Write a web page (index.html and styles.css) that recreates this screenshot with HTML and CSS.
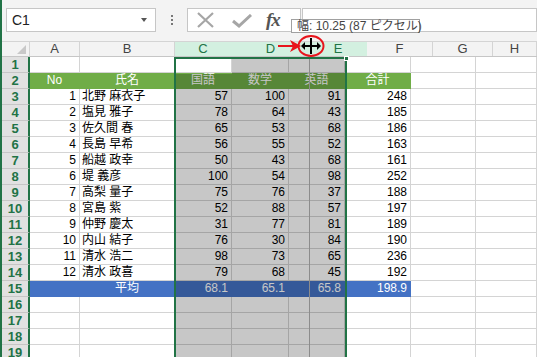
FILE: index.html
```html
<!doctype html>
<html lang="ja">
<head>
    <meta charset="utf-8">
    <title>列幅の変更</title>
    <link rel="stylesheet" href="styles.css">
</head>
<body>
<div class="window">
    <div class="toolbar">
        <div class="namebox"><span>C1</span><i class="caret"></i></div>
        <div class="dots"><i></i><i></i><i></i></div>
        <div class="fbuttons">
            <svg class="ic-x" width="18" height="16" viewBox="0 0 18 16"><path d="M1 1L16 15M16 1L1 15" stroke="#a6a6a6" stroke-width="2.2" fill="none"/></svg>
            <svg class="ic-ok" width="20" height="14" viewBox="0 0 20 14"><path d="M1 7L7 12L19 1" stroke="#a6a6a6" stroke-width="3" fill="none"/></svg>
            <span class="fx">fx</span>
        </div>
        <div class="finput"></div>
    </div>

    <div class="sheet">
        <div class="colhead">
            <div class="corner"><i></i></div>
            <div>A</div><div>B</div>
            <div class="on">C</div><div class="on">D</div><div class="on">E</div>
            <div>F</div><div>G</div><div>H</div>
        </div>

        <div class="row"><div class="rh">1</div><div></div><div></div><div></div><div></div><div></div><div></div><div></div><div></div></div>
        <div class="row green"><div class="rh">2</div><div class="c">No</div><div class="c">氏名</div><div class="c">国語</div><div class="c">数学</div><div class="c">英語</div><div class="c">合計</div><div class="n"></div><div class="n"></div></div>
        <div class="row"><div class="rh">3</div><div class="r">1</div><div>北野 麻衣子</div><div class="r">57</div><div class="r">100</div><div class="r">91</div><div class="r">248</div><div></div><div></div></div>
        <div class="row"><div class="rh">4</div><div class="r">2</div><div>塩見 雅子</div><div class="r">78</div><div class="r">64</div><div class="r">43</div><div class="r">185</div><div></div><div></div></div>
        <div class="row"><div class="rh">5</div><div class="r">3</div><div>佐久間 春</div><div class="r">65</div><div class="r">53</div><div class="r">68</div><div class="r">186</div><div></div><div></div></div>
        <div class="row"><div class="rh">6</div><div class="r">4</div><div>長島 早希</div><div class="r">56</div><div class="r">55</div><div class="r">52</div><div class="r">163</div><div></div><div></div></div>
        <div class="row"><div class="rh">7</div><div class="r">5</div><div>船越 政幸</div><div class="r">50</div><div class="r">43</div><div class="r">68</div><div class="r">161</div><div></div><div></div></div>
        <div class="row"><div class="rh">8</div><div class="r">6</div><div>堤 義彦</div><div class="r">100</div><div class="r">54</div><div class="r">98</div><div class="r">252</div><div></div><div></div></div>
        <div class="row"><div class="rh">9</div><div class="r">7</div><div>高梨 量子</div><div class="r">75</div><div class="r">76</div><div class="r">37</div><div class="r">188</div><div></div><div></div></div>
        <div class="row"><div class="rh">10</div><div class="r">8</div><div>宮島 紫</div><div class="r">52</div><div class="r">88</div><div class="r">57</div><div class="r">197</div><div></div><div></div></div>
        <div class="row"><div class="rh">11</div><div class="r">9</div><div>仲野 慶太</div><div class="r">31</div><div class="r">77</div><div class="r">81</div><div class="r">189</div><div></div><div></div></div>
        <div class="row"><div class="rh">12</div><div class="r">10</div><div>内山 結子</div><div class="r">76</div><div class="r">30</div><div class="r">84</div><div class="r">190</div><div></div><div></div></div>
        <div class="row"><div class="rh">13</div><div class="r">11</div><div>清水 浩二</div><div class="r">98</div><div class="r">73</div><div class="r">65</div><div class="r">236</div><div></div><div></div></div>
        <div class="row"><div class="rh">14</div><div class="r">12</div><div>清水 政喜</div><div class="r">79</div><div class="r">68</div><div class="r">45</div><div class="r">192</div><div></div><div></div></div>
        <div class="row blue"><div class="rh">15</div><div class="c"></div><div class="c">平均</div><div class="r">68.1</div><div class="r">65.1</div><div class="r">65.8</div><div class="r">198.9</div><div class="n"></div><div class="n"></div></div>
        <div class="row"><div class="rh">16</div><div></div><div></div><div></div><div></div><div></div><div></div><div></div><div></div></div>
        <div class="row"><div class="rh">17</div><div></div><div></div><div></div><div></div><div></div><div></div><div></div><div></div></div>
        <div class="row"><div class="rh">18</div><div></div><div></div><div></div><div></div><div></div><div></div><div></div><div></div></div>
        <div class="row"><div class="rh">19</div><div></div><div></div><div></div><div></div><div></div><div></div><div></div><div></div></div>

        <!-- selected columns C:E -->
        <div class="shade"></div>
        <div class="guide"></div>
        <div class="selbox"><i class="handle"></i></div>
    </div>

    <div class="tip">幅: 10.25 (87 ピクセル)</div>

    <svg class="mark" width="60" height="26" viewBox="0 0 60 26">
        <path d="M2 11H20" stroke="#e8141c" stroke-width="2" fill="none"/>
        <path d="M14 5L25 11L14 17L17 11Z" fill="#e8141c"/>
        <ellipse cx="35" cy="11" rx="12.5" ry="10" stroke="#e8141c" stroke-width="2" fill="none"/>
        <path d="M35 3V19M26 11H44" stroke="#000" stroke-width="2" fill="none"/>
        <path d="M25 11L29 7V15Z M45 11L41 7V15Z" fill="#000"/>
    </svg>
</div>
</body>
</html>
```

FILE: styles.css
```css
* {
    margin: 0;
    padding: 0;
    box-sizing: border-box;
}

body {
    width: 537px;
    height: 357px;
    overflow: hidden;
    font-family: "Liberation Sans", "Noto Sans CJK JP", sans-serif;
    font-size: 12px;
    color: #000;
    background: #fff;
}

.window {
    position: relative;
    height: 357px;
    border-left: 2px solid #217346;
    overflow: hidden;
}

/* formula bar */
.toolbar {
    display: flex;
    height: 42px;
    padding-top: 8px;
    background: #f3f3f3;
    border-bottom: 1px solid #d4d4d4;
}

.namebox {
    position: relative;
    width: 150px;
    height: 24px;
    margin-left: 4px;
    background: #fff;
    border: 1px solid #c6c6c6;
    font-size: 14px;
    line-height: 22px;
    padding-left: 5px;
    color: #222;
}

.caret {
    position: absolute;
    right: 8px;
    top: 9px;
    border-left: 3px solid transparent;
    border-right: 3px solid transparent;
    border-top: 4px solid #555;
}

.dots {
    width: 31px;
    display: flex;
    flex-direction: column;
    align-items: center;
    gap: 2px;
    padding-top: 7px;
}

.dots i {
    width: 2px;
    height: 2px;
    background: #777;
}

.fbuttons {
    width: 114px;
    height: 24px;
    background: #fff;
    border: 1px solid #c6c6c6;
    display: flex;
    align-items: center;
}

.ic-x {
    margin-left: 9px;
}

.ic-ok {
    margin-left: 17px;
    margin-top: 2px;
}

.fx {
    margin-left: 14px;
    font-family: "Liberation Serif", serif;
    font-style: italic;
    font-weight: bold;
    font-size: 19px;
    color: #555;
    line-height: 20px;
    letter-spacing: -1px;
}

.finput {
    flex: 1;
    height: 24px;
    margin-left: 1px;
    background: #fff;
    border: 1px solid #c6c6c6;
}

/* grid */
.sheet {
    position: relative;
}

.colhead,
.row {
    display: grid;
    height: 16px;
}

.colhead {
    grid-template-columns: 28px 50px 95px 57px 78px 57px 66px 60px 1fr;
    height: 15px;
    background: #f3f3f3;
    border-bottom: 1px solid #c6c6c6;
}

.colhead div {
    border-right: 1px solid #d4d4d4;
    text-align: center;
    font-size: 13px;
    line-height: 14px;
    color: #444;
}

.colhead div.on {
    background: #d3f0e0;
    color: #217346;
    border-right-color: #d3f0e0;
}

.corner {
    position: relative;
}

.corner i {
    position: absolute;
    right: 3px;
    bottom: 2px;
    border-left: 9px solid transparent;
    border-bottom: 9px solid #c8c8c8;
}

.row {
    grid-template-columns: 28px 50px 95px 57px 57px 56px 66px 65px 1fr;
}

.row div {
    border-right: 1px solid #d4d4d4;
    border-bottom: 1px solid #d4d4d4;
    line-height: 15px;
    padding-left: 2px;
    white-space: nowrap;
    overflow: hidden;
}

.row .rh {
    background: #e1e1e1;
    border-right: 2px solid #217346;
    border-bottom: 1px solid #c6c6c6;
    color: #217346;
    font-weight: bold;
    font-size: 13px;
    text-align: center;
    padding-left: 0;
}

.row .r {
    text-align: right;
    padding: 0 3px 0 0;
}

.row .c {
    text-align: center;
    padding: 0;
}

.green div {
    background: #70ad47;
    border-color: #70ad47;
    color: #fff;
}

.blue div {
    background: #4472c4;
    border-color: #4472c4;
    color: #fff;
}

.row div.n {
    background: #fff;
    border-color: #d4d4d4;
}

/* selection of columns C:E */
.shade {
    position: absolute;
    left: 173px;
    top: 16px;
    width: 170px;
    bottom: 0;
    background: rgba(0, 0, 0, 0.22);
    clip-path: polygon(57px 0, 100% 0, 100% 100%, 0 100%, 0 16px, 57px 16px);
}

.guide {
    position: absolute;
    left: 307px;
    top: 16px;
    width: 1px;
    bottom: 0;
    background: #8c8c8c;
}

.selbox {
    position: absolute;
    left: 172px;
    top: 15px;
    width: 173px;
    height: 400px;
    border: 2px solid #217346;
}

.handle {
    position: absolute;
    right: -4px;
    top: -3px;
    width: 5px;
    height: 5px;
    background: #217346;
    border: 1px solid #fff;
}

/* drag tooltip and marker */
.tip {
    position: absolute;
    left: 289px;
    top: 19px;
    width: 129px;
    height: 14px;
    background: #fff;
    border: 1px solid #a0a0a0;
    font-size: 12px;
    line-height: 12px;
    padding-left: 5px;
    color: #444;
    white-space: nowrap;
}

.mark {
    position: absolute;
    left: 274px;
    top: 35px;
}
```
